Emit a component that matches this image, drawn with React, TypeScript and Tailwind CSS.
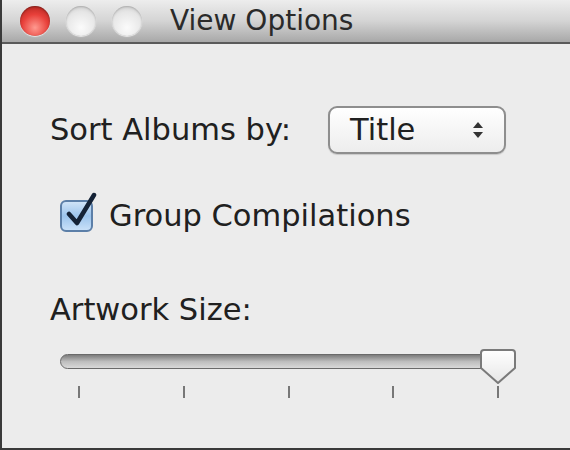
import React from "react";

const font = { fontFamily: '"DejaVu Sans", "Lucida Grande", sans-serif' };

function Light({ red }: { red?: boolean }) {
  return (
    <span
      className={
        red
          ? "h-[30px] w-[30px] rounded-full bg-[radial-gradient(circle_at_50%_72%,#ff9a90_0%,#e8403a_50%,#a41f18_100%)] shadow-[0_1px_1px_rgba(255,255,255,0.7),inset_0_1px_2px_rgba(0,0,0,0.35)]"
          : "h-[30px] w-[30px] rounded-full bg-[radial-gradient(circle_at_50%_72%,#fbfbfb_0%,#e6e6e6_60%,#c2c2c2_100%)] shadow-[0_1px_1px_rgba(255,255,255,0.7),inset_0_1px_2px_rgba(0,0,0,0.2)]"
      }
    />
  );
}

export default function App() {
  const ticks = [78, 183, 288, 392, 497];
  return (
    <div className="flex h-[450px] w-[570px] flex-col overflow-hidden border-b-2 border-l-2 border-[#3a3a3a] bg-[#ececec] text-[#202020]" style={font}>
      {/* title bar */}
      <div className="flex h-[44px] shrink-0 items-center border-b-2 border-[#5a5a5a] bg-gradient-to-b from-[#ededed] via-[#d4d4d4] to-[#a8a8a8] pl-[18px]">
        <div className="flex gap-[16px]">
          <Light red />
          <Light />
          <Light />
        </div>
        <span className="ml-[28px] text-[28px] leading-none text-[#2a2a2a]">View Options</span>
      </div>

      <div className="flex flex-col pl-[48px] pr-[58px] pt-[62px]">
        {/* sort row */}
        <div className="flex items-center">
          <span className="text-[30.5px] leading-none">Sort Albums by:</span>
          <div className="ml-auto mr-[6px] flex h-[48px] w-[178px] items-center justify-between rounded-[9px] border-2 border-[#8e8e8e] bg-gradient-to-b from-white to-[#ededed] pl-[20px] pr-[20px] shadow-[0_1px_1px_rgba(0,0,0,0.15)]">
            <span className="text-[30.5px] leading-none">Title</span>
            <svg width="12" height="20" viewBox="0 0 12 20" className="text-[#333]">
              <path d="M6 2 L11 8 H1 Z" fill="currentColor" />
              <path d="M6 18 L11 12 H1 Z" fill="currentColor" />
            </svg>
          </div>
        </div>

        {/* checkbox row */}
        <div className="mt-[46px] flex items-center pl-[10px]">
          <span className="relative flex h-[32px] w-[33px] items-center justify-center rounded-[6px] border-2 border-[#5c7fa8] bg-gradient-to-b from-[#cfe3f7] via-[#9cc4ec] to-[#c8e0f8]">
            <svg className="absolute -top-[10px] left-[2px]" width="34" height="38" viewBox="0 0 34 38">
              <path d="M5 22 L13 31 L30 3" fill="none" stroke="#142236" strokeWidth="4.5" strokeLinecap="round" strokeLinejoin="round" />
            </svg>
          </span>
          <span className="ml-[16px] text-[30.5px] leading-none">Group Compilations</span>
        </div>

        {/* artwork size */}
        <span className="mt-[63px] text-[30.5px] leading-none">Artwork Size:</span>

        <div className="relative mt-[22px] h-[52px]">
          <div className="absolute left-[10px] right-[2px] top-[6px] h-[15px] rounded-full border border-[#6a6a6a] bg-gradient-to-b from-[#7c7c7c] via-[#bdbdbd] to-[#d9d9d9]" />
          {ticks.map((x) => (
            <span key={x} className="absolute top-[38px] h-[12px] w-[2px] bg-[#777]" style={{ left: x - 50 }} />
          ))}
          <svg className="absolute left-[428px] top-0" width="40" height="40" viewBox="0 0 40 40">
            <defs>
              <linearGradient id="thumb" x1="0" y1="0" x2="0" y2="1">
                <stop offset="0" stopColor="#ffffff" />
                <stop offset="1" stopColor="#e6e6e6" />
              </linearGradient>
            </defs>
            <path d="M6 2 H34 Q37 2 37 5 V20 L20 35 L3 20 V5 Q3 2 6 2 Z" fill="url(#thumb)" stroke="#7a7a7a" strokeWidth="2" strokeLinejoin="round" />
          </svg>
        </div>
      </div>
    </div>
  );
}
